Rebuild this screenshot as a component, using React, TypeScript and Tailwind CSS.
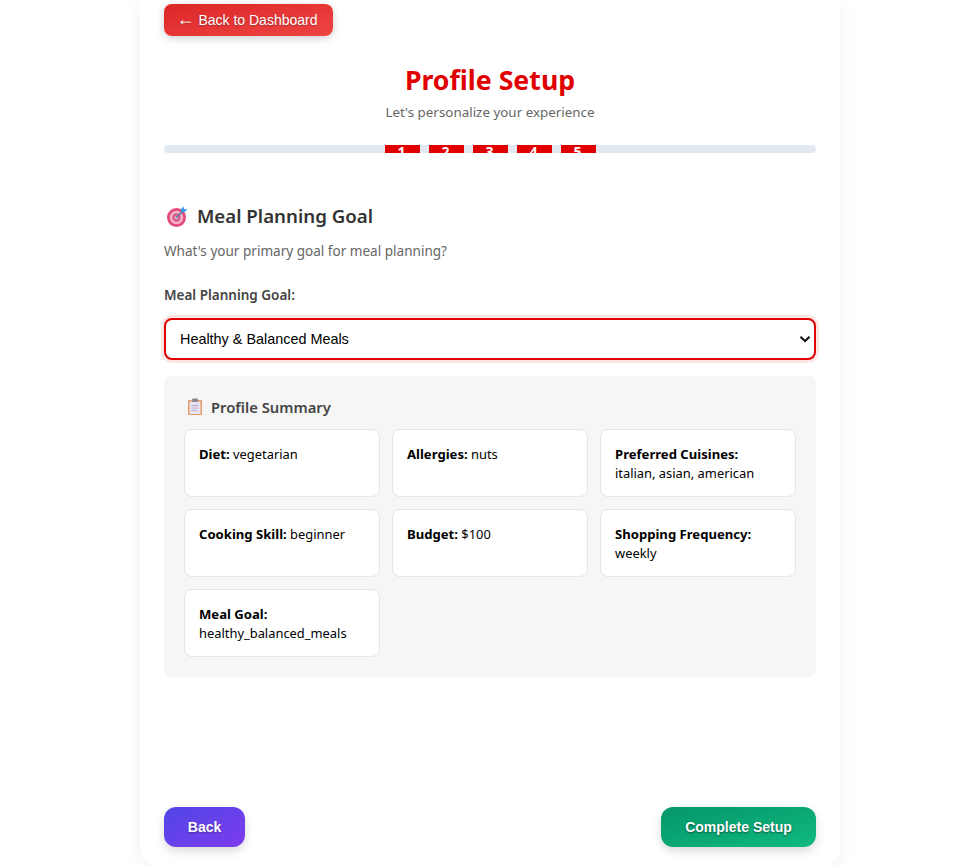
const sans = { fontFamily: '"Noto Sans", sans-serif' };

function TargetIcon() {
  return (
    <svg width="24" height="24" viewBox="0 0 24 24" className="shrink-0">
      <circle cx="12.5" cy="13.5" r="9.5" fill="#e5487a" />
      <circle cx="12.5" cy="13.5" r="6.8" fill="#f2b3c9" />
      <circle cx="12.5" cy="13.5" r="4.2" fill="#e0558a" />
      <circle cx="12.5" cy="13.5" r="2" fill="#c9b6cf" />
      <path d="M12.5 13.5 19 7" stroke="#3c6fa8" strokeWidth="1.3" />
      <path d="M17 5 19.5 2.5l.7 2.8 3.3-.3-3 3.2-3.5-.2z" fill="#3b9ae6" />
    </svg>
  );
}

function ClipboardIcon() {
  return (
    <svg width="16" height="18" viewBox="0 0 16 18" className="shrink-0">
      <rect x="1" y="2" width="14" height="15" rx="1" fill="#e49c66" />
      <rect x="2.5" y="3.5" width="11" height="12.5" fill="#e8e3f1" />
      <rect x="5" y="0.5" width="6" height="3.5" rx="1" fill="#8d8595" />
      <path d="M4.5 7.5h7M4.5 10h7M4.5 12.5h5" stroke="#b5abc8" strokeWidth="1" />
    </svg>
  );
}

function Item({ label, value }: { label: string; value: string }) {
  return (
    <div className="h-[68px] rounded-lg border border-[#e5e5e5] bg-white px-[14px] pt-[15px] text-[12.9px] leading-[19px] text-black">
      <strong className="text-[13.1px] font-bold">{label}:</strong> <span className="inline-block">{value}</span>
    </div>
  );
}

export default function App() {
  return (
    <div className="min-h-[865px] bg-white" style={sans}>
      <div className="ml-[140px] flex h-[865px] w-[700px] flex-col rounded-b-2xl bg-white px-6 pt-1 shadow-[0_4px_20px_rgba(0,0,0,0.06)]">
        <button
          className="h-8 w-[169px] rounded-lg bg-linear-to-br from-[#dc2626] to-[#ef4444] pr-[3px] text-[14px] text-white shadow-[0_2px_8px_rgba(0,0,0,0.2)] [text-shadow:0_1px_2px_rgba(0,0,0,0.3)]"
          style={{ fontFamily: '"Liberation Sans", sans-serif' }}
        >
          <span className="text-[18px] leading-[14px]">←</span> Back to Dashboard
        </button>

        <h1 className="mt-[24px] text-center text-[26.7px] font-bold leading-[40px] text-[#e00000]">Profile Setup</h1>
        <p className="mt-[2px] text-center text-[13.4px] leading-[20px] text-[#666]">Let's personalize your experience</p>

        <div className="mt-[23px] flex h-2 justify-center gap-[9px] overflow-hidden rounded bg-[#e2e8f0]">
          {[1, 2, 3, 4, 5].map((n) => (
            <div key={n} className="h-[35px] w-[35px] shrink-0 bg-[#e00000] pr-[1px] text-center text-[14px] font-bold leading-[13px] text-white">
              {n}
            </div>
          ))}
        </div>

        <div className="mt-[49px] flex items-center gap-[9px]">
          <TargetIcon />
          <h2 className="text-[18.7px] font-semibold leading-[27px] text-[#333]">Meal Planning Goal</h2>
        </div>
        <p className="mt-[12px] text-[13.55px] leading-[20px] text-[#666]">What's your primary goal for meal planning?</p>

        <label className="mt-[24px] block text-[13.5px] font-semibold leading-[20px] text-[#444]">Meal Planning Goal:</label>

        <div className="relative mt-[13px]">
          <select
            className="h-[42px] w-full appearance-none rounded-lg border-2 border-[#e00000] bg-white pl-[14px] pr-[24px] pt-[2px] text-[14.4px] text-black shadow-[0_0_0_3px_rgba(224,0,0,0.1)] outline-none"
            style={{ fontFamily: '"Liberation Sans", sans-serif' }}
            defaultValue="healthy"
          >
            <option value="healthy">Healthy &amp; Balanced Meals</option>
          </select>
          <svg width="12" height="8" viewBox="0 0 12 8" className="pointer-events-none absolute right-[5px] top-[17px]">
            <path d="M1.5 1.7 6 6l4.5-4.3" fill="none" stroke="#111" strokeWidth="2" />
          </svg>
        </div>

        <section className="mt-[16px] rounded-lg bg-[#f6f6f6] p-5">
          <div className="flex h-[20px] items-center gap-[8px] pl-[3px]">
            <span className="relative top-px">
              <ClipboardIcon />
            </span>
            <h3 className="relative top-px text-[14.8px] font-semibold leading-[20px] text-[#444]">Profile Summary</h3>
          </div>
          <div className="mt-[13px] grid grid-cols-3 gap-3">
            <Item label="Diet" value="vegetarian" />
            <Item label="Allergies" value="nuts" />
            <Item label="Preferred Cuisines" value="italian, asian, american" />
            <Item label="Cooking Skill" value="beginner" />
            <Item label="Budget" value="$100" />
            <Item label="Shopping Frequency" value="weekly" />
            <Item label="Meal Goal" value="healthy_balanced_meals" />
          </div>
        </section>

        <div className="mt-auto mb-[18px] flex justify-between" style={{ fontFamily: '"Liberation Sans", sans-serif' }}>
          <button className="h-10 w-[81px] rounded-xl bg-linear-to-br from-[#4f46e5] to-[#7c3aed] text-[14px] font-bold text-white shadow-[0_4px_10px_rgba(0,0,0,0.15)] [text-shadow:0_1px_2px_rgba(0,0,0,0.35)]">
            Back
          </button>
          <button className="h-10 w-[155px] rounded-xl bg-linear-to-br from-[#059669] to-[#10b981] text-[14px] font-bold text-white shadow-[0_4px_10px_rgba(0,0,0,0.15)] [text-shadow:0_1px_2px_rgba(0,0,0,0.5)]">
            Complete Setup
          </button>
        </div>
      </div>
    </div>
  );
}
